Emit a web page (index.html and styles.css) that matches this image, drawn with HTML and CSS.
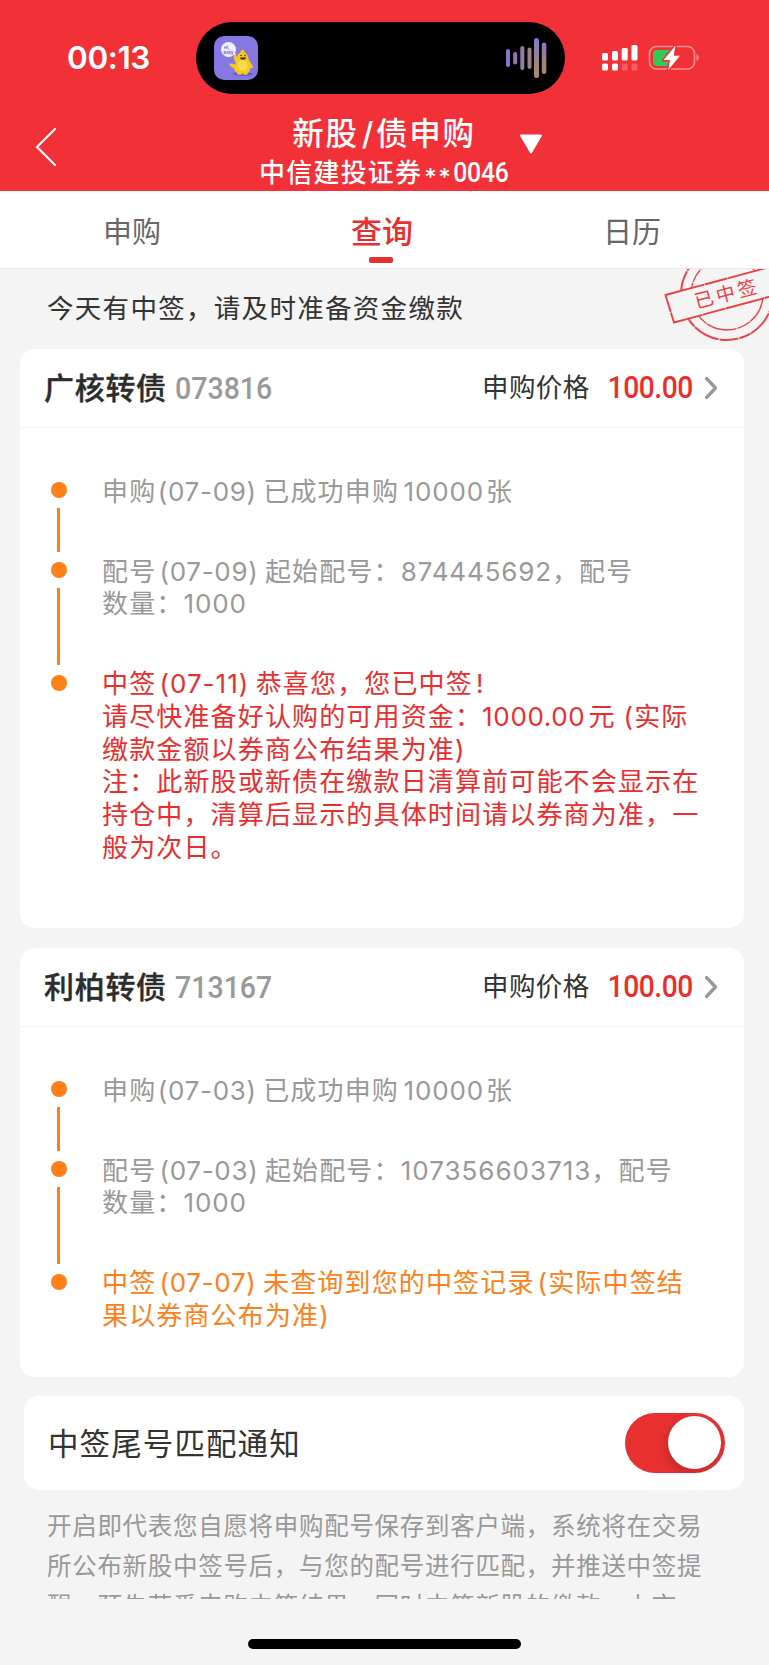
FILE: index.html
```html
<!DOCTYPE html>
<html lang="zh-CN">
<head>
<meta charset="utf-8">
<title>新股/债申购</title>
<link rel="stylesheet" href="styles.css">
</head>
<body>
<div class="screen">
  <header class="header">
    <div class="status">
      <div class="clock">00:13</div>
      <div class="island">
        <svg class="app-icon" viewBox="0 0 44 44">
          <rect width="44" height="44" rx="10" fill="#8578e2"/>
          <ellipse cx="29" cy="38" rx="10" ry="2" fill="#6a5cc0"/>
          <circle cx="14.500" cy="13.500" r="7.500" fill="#f1effc"/>
          <path d="M19 18l3 2-1-4z" fill="#f1effc"/>
          <text x="10" y="13" class="icon-text">Hi,</text>
          <text x="9.500" y="17.500" class="icon-text">Baby</text>
          <path d="M29 13.500c1.500 1 1.200 2 2.500 3.500 2 1.500 3 4 3.300 7 1.500 2 3 4 4 6.500.5 2-1.500 2.500-2.800 1.500.3 2.500-.7 4.500-2.500 5.500v1.200h-4v-1h-2v1h-4v-1.500c-2-1-3.500-3-3.500-5-2-.2-4-2.200-5.200-4.800l3 .4 3 .6 1-1c-.8-2.600-2.200-4.500-2.300-6.800.1-2 2.500-1.500 3.500.5.2-2 1.300-3.300 3-4.300.3-1.500 1.500-3 3-3.300z" fill="#f5c81c"/>
          <ellipse cx="28.500" cy="29.500" rx="5" ry="5.500" fill="#f4dc4c"/>
          <path d="M26 21.500h6c0 3-6 3-6 0z" fill="#45310d"/>
          <circle cx="27" cy="19.500" r=".8" fill="#45310d"/><circle cx="31" cy="19.500" r=".8" fill="#45310d"/>
        </svg>
        <svg class="wave" viewBox="0 0 42 42">
          <defs><linearGradient id="wave" x1="0" y1="0" x2="0" y2="42" gradientUnits="userSpaceOnUse"><stop offset=".1" stop-color="#8877c8"/><stop offset=".75" stop-color="#a68a6d"/></linearGradient></defs>
          <rect x="1" y="12" width="4" height="18" rx="2" fill="#8577cc"/>
          <rect x="8.200" y="15" width="4" height="12.500" rx="2" fill="#8c79b5"/>
          <rect x="15.300" y="9" width="4" height="24" rx="2" fill="#957ca3"/>
          <rect x="22.500" y="10.500" width="4" height="21.500" rx="2" fill="#9c8088"/>
          <rect x="29" y="1" width="5" height="40" rx="2.500" fill="url(#wave)"/>
          <rect x="36.800" y="5.500" width="4.500" height="31.500" rx="2.200" fill="url(#wave)"/>
        </svg>
      </div>
      <svg class="signal" viewBox="0 0 98 28">
        <g fill="#fff">
          <rect x="0" y="10" width="6" height="7.500" rx="1.500"/>
          <rect x="10" y="8" width="6" height="9.500" rx="1.500"/>
          <rect x="19.700" y="5" width="6" height="12.500" rx="1.500"/>
          <rect x="29.500" y="2" width="6" height="15.500" rx="1.500"/>
          <rect x="0" y="20.500" width="6" height="7" rx="1.500"/>
          <rect x="10" y="20.500" width="6" height="7" rx="1.500"/>
          <rect x="19.700" y="20.500" width="6" height="7" rx="1.500" opacity=".22"/>
          <rect x="29.500" y="20.500" width="6" height="7" rx="1.500" opacity=".22"/>
        </g>
        <rect x="47.500" y="3.500" width="45" height="22.500" rx="7" fill="none" stroke="#f98f94" stroke-width="1.600"/>
        <path d="M94.500 11v7c3-1 3-6 0-7z" fill="#f98f94"/>
        <path d="M55 7h13v16H55q-4 0-4-4v-8q0-4 4-4z" fill="#34c759"/>
        <path d="M73.500 2.500L61.500 17h6.500L66.300 27 78 12.800h-6.300z" fill="#fff" stroke="#f23038" stroke-width="3" stroke-linejoin="round" paint-order="stroke"/>
      </svg>
    </div>
    <div class="nav">
      <svg class="back" viewBox="0 0 22 40"><path d="M20 2L2 20l18 18" fill="none" stroke="#fff" stroke-width="2.200" stroke-linecap="round"/></svg>
      <div class="nav-text">
        <div class="title">新股<span class="slash">/</span>债申购</div>
        <div class="subtitle">中信建投证券<span class="stars">**</span><span class="account">0046</span></div>
      </div>
      <svg class="caret" viewBox="0 0 24 20"><path d="M2 1.500h20L12 18.500z" fill="#fff" stroke="#fff" stroke-width="2" stroke-linejoin="round"/></svg>
    </div>
  </header>

  <nav class="tabs">
    <div class="tab">申购</div>
    <div class="tab tab-active">查询</div>
    <div class="tab">日历</div>
  </nav>

  <main class="content">
    <div class="notice">今天有中签，请及时准备资金缴款
      <svg class="stamp" viewBox="0 0 109 82">
        <g fill="none" stroke="#ea4245">
          <circle cx="67" cy="27" r="46" stroke-width="2" stroke-dasharray="19 1 27 .6 12 1"/>
          <circle cx="67" cy="27" r="36" stroke-width="1.300" stroke-dasharray="31 .7 14 1"/>
          <path d="M5.500 28L130-5.400l8 27.400L14 55.500z" fill="#f4f4f4" stroke-width="1.900" stroke-dasharray="40 .6 23 .5"/>
        </g>
        <text class="stamp-text" transform="translate(36.500 41.500) rotate(-14.500)">已中签</text>
      </svg>
    </div>

    <section class="card card-first">
      <div class="card-head">
        <div class="name">广核转债</div><div class="code">073816</div>
        <div class="label">申购价格</div><div class="price">100.00</div>
        <svg class="chevron" viewBox="0 0 14 24"><path d="M2.500 2.500l9 9.500-9 9.500" fill="none" stroke="#999" stroke-width="3.300" stroke-linecap="round" stroke-linejoin="round"/></svg>
      </div>
      <div class="steps">
        <div class="step"><div class="rail"><i class="dot"></i><i class="line"></i></div>
          <div class="text">申购<span class="date">(07-09)</span>已成功申购<span class="num spaced">10000</span>张</div></div>
        <div class="step"><div class="rail"><i class="dot"></i><i class="line"></i></div>
          <div class="text">配号<span class="date">(07-09)</span>起始配号：<span class="num">874445692</span>，配号<br>数量：<span class="num">1000</span></div></div>
        <div class="step"><div class="rail"><i class="dot"></i></div>
          <div class="text red">中签<span class="date wide">(07-11)</span>恭喜您，您已中签<span class="bang">!</span><br>请尽快准备好认购的可用资金：<span class="num amount">1000.00</span>元<span class="paren">(</span>实际<br>缴款金额以券商公布结果为准<span class="close">)</span><br>注：此新股或新债在缴款日清算前可能不会显示在<br>持仓中，清算后显示的具体时间请以券商为准，一<br>般为次日。</div></div>
      </div>
    </section>

    <section class="card card-second">
      <div class="card-head">
        <div class="name">利柏转债</div><div class="code">713167</div>
        <div class="label">申购价格</div><div class="price">100.00</div>
        <svg class="chevron" viewBox="0 0 14 24"><path d="M2.500 2.500l9 9.500-9 9.500" fill="none" stroke="#999" stroke-width="3.300" stroke-linecap="round" stroke-linejoin="round"/></svg>
      </div>
      <div class="steps">
        <div class="step"><div class="rail"><i class="dot"></i><i class="line"></i></div>
          <div class="text">申购<span class="date">(07-03)</span>已成功申购<span class="num spaced">10000</span>张</div></div>
        <div class="step"><div class="rail"><i class="dot"></i><i class="line"></i></div>
          <div class="text">配号<span class="date">(07-03)</span>起始配号：<span class="num long">107356603713</span>，配号<br>数量：<span class="num">1000</span></div></div>
        <div class="step"><div class="rail"><i class="dot"></i></div>
          <div class="text orange">中签<span class="date">(07-07)</span>未查询到您的中签记录<span class="paren-tight">(</span>实际中签结<br>果以券商公布为准<span class="close">)</span></div></div>
      </div>
    </section>

    <section class="switch-card">
      <div class="switch-label">中签尾号匹配通知</div>
      <div class="switch"><i class="knob"></i></div>
    </section>

    <div class="agreement">开启即代表您自愿将申购配号保存到客户端，系统将在交易<br>所公布新股中签号后，与您的配号进行匹配，并推送中签提<br>醒，预先获悉申购中签结果，同时中签新股的缴款、上市</div>
  </main>
  <footer class="home"><div class="home-bar"></div></footer>
</div>
</body>
</html>
```
FILE: styles.css
```css
* { box-sizing: border-box; }
body {
  margin: 0;
  background: #f4f4f4;
  color: #333;
  font-family: Inter, "Noto Sans CJK SC", sans-serif;
}
.screen { width: 769px; height: 1665px; overflow: hidden; display: flex; flex-direction: column; white-space: nowrap; }

.header { height: 191px; background: #f23038; color: #fff; flex: none; }
.status { height: 94px; padding-top: 22px; display: flex; align-items: flex-start; }
.clock { width: 195.5px; padding-left: 67px; font-size: 31.500px; font-weight: 600; line-height: 72px; letter-spacing: -.4px; }
.island { width: 369.5px; height: 72px; border-radius: 36px; background: #000; padding: 14px 18px; display: flex; justify-content: space-between; align-items: flex-start; }
.app-icon { width: 44px; height: 44px; }
.icon-text { font: 700 4px Inter, sans-serif; fill: #7a6cc8; }
.wave { width: 42px; height: 42px; margin-top: 1px; }
.signal { width: 98px; height: 28px; margin: 20.5px 0 0 37px; }
.nav { height: 97px; display: flex; align-items: flex-start; }
.back { width: 22px; height: 40px; margin: 33px 0 0 35px; }
.nav-text { width: 420px; margin-left: 117px; text-align: center; padding-top: 19px; }
.title { font-size: 31.500px; font-weight: 500; line-height: 42px; letter-spacing: 1.700px; }
.slash { margin: 0 1px 0 3px; }
.subtitle { font-size: 26px; font-weight: 500; line-height: 36px; letter-spacing: 1.200px; }
.stars { font-size: 24px; letter-spacing: 1.500px; margin-left: 2px; line-height: 0; vertical-align: -4px; }
.account { display: inline-block; margin-left: -5px; font: 500 27.500px/30px Roboto, sans-serif; letter-spacing: -.2px; transform: scaleX(.9); transform-origin: right; }
.caret { width: 24px; height: 20px; margin: 40px 0 0 -75px; }

.tabs { height: 78px; flex: none; background: #fff; border-bottom: 1px solid #e9e9e9; display: flex; padding: 0 12px 0 7px; }
.tab { flex: 1; text-align: center; font-size: 29px; line-height: 83px; color: #666; }
.tab-active { color: #ea2e2f; font-size: 31px; line-height: 82px; font-weight: 500; position: relative; }
.tab-active::after { content: ""; position: absolute; left: 50%; margin-left: -13px; bottom: 5px; width: 24px; height: 6px; border-radius: 2px; background: #ea2e2f; }

.content { height: 1330px; flex: none; overflow: hidden; }
.notice { height: 80px; padding-left: 47px; line-height: 79px; font-size: 26.500px; letter-spacing: 1.300px; position: relative; overflow: hidden; }
.stamp { position: absolute; right: 0; top: -2px; width: 109px; height: 82px; overflow: visible; }
.stamp-text { font-size: 19px; letter-spacing: 3.200px; fill: #ea4245; }

.card { margin: 0 25px 20px 20px; background: #fff; border-radius: 15px; overflow: hidden; }
.card-first { height: 579px; }
.card-second { height: 429px; margin-bottom: 19px; }
.card-head { height: 79px; border-bottom: 1.500px solid #f3f3f3; display: flex; align-items: center; padding: 0 26px 0 24px; }
.name { font-size: 30px; font-weight: 500; letter-spacing: .7px; color: #2c2c2c; -webkit-text-stroke: .4px #2c2c2c; padding-bottom: 4px; }
.code { margin-left: 8px; font: 500 31px Roboto, sans-serif; color: #999; transform: scaleX(.92); transform-origin: left; }
.label { margin-left: auto; font-size: 26.500px; letter-spacing: .4px; padding-bottom: 5px; }
.price { margin-left: 6px; font: 500 32px Roboto, sans-serif; letter-spacing: -.5px; color: #ea2e2f; transform: scaleX(.88); transform-origin: right; padding-bottom: 3px; }
.chevron { width: 14px; height: 24px; margin-left: 11.5px; }

.steps { padding: 46px 0 0 31px; }
.step { display: flex; }
.text { margin-left: 35px; padding-top: 1.500px; font-size: 26px; line-height: 32.700px; letter-spacing: 1.150px; color: #999; }
.step:not(:last-child) .text { padding-bottom: 45.800px; }
.rail { width: 16px; padding-top: 8px; display: flex; flex-direction: column; align-items: center; }
.dot { width: 16px; height: 16px; border-radius: 50%; background: #ff8018; flex: none; }
.line { width: 3px; flex: 1; background: #ff8018; margin: 9.500px 1px 2px 0; }
.red { color: #ea2e2f; }
.orange { color: #ff8018; }
.date { margin: 0 6.500px 0 3.200px; letter-spacing: .7px; }
.step:first-child .date { margin-left: 1.500px; }
.date.wide { letter-spacing: 1px; }
.num { letter-spacing: .85px; }
.num.long { letter-spacing: 1px; }
.spaced { margin: 0 2px 0 4.500px; }
.amount { margin-right: 3px; letter-spacing: .65px; }
.bang { margin-left: 3px; }
.paren { margin-left: 8px; }
.paren-tight { margin-left: 3px; }

.switch-card { margin: 0 25px 0 24px; height: 93.500px; background: #fff; border-radius: 15px; padding: 0 19px 0 24px; display: flex; align-items: center; justify-content: space-between; }
.switch-label { font-size: 30.500px; letter-spacing: 1.100px; padding-bottom: 2px; }
.switch { width: 100px; height: 60px; border-radius: 30px; background: #e83031; padding: 3.500px 4px; display: flex; justify-content: flex-end; overflow: hidden; }
.knob { width: 53px; height: 53px; border-radius: 50%; background: #fff; box-shadow: -2px 4px 9px rgba(0, 0, 0, .16); }
.agreement { padding: 16px 0 0 47px; font-size: 24.500px; line-height: 40px; letter-spacing: .7px; color: #999; }

.home { flex: 1; display: flex; justify-content: center; padding-top: 40px; }
.home-bar { width: 273px; height: 10px; border-radius: 5px; background: #000; }
```
